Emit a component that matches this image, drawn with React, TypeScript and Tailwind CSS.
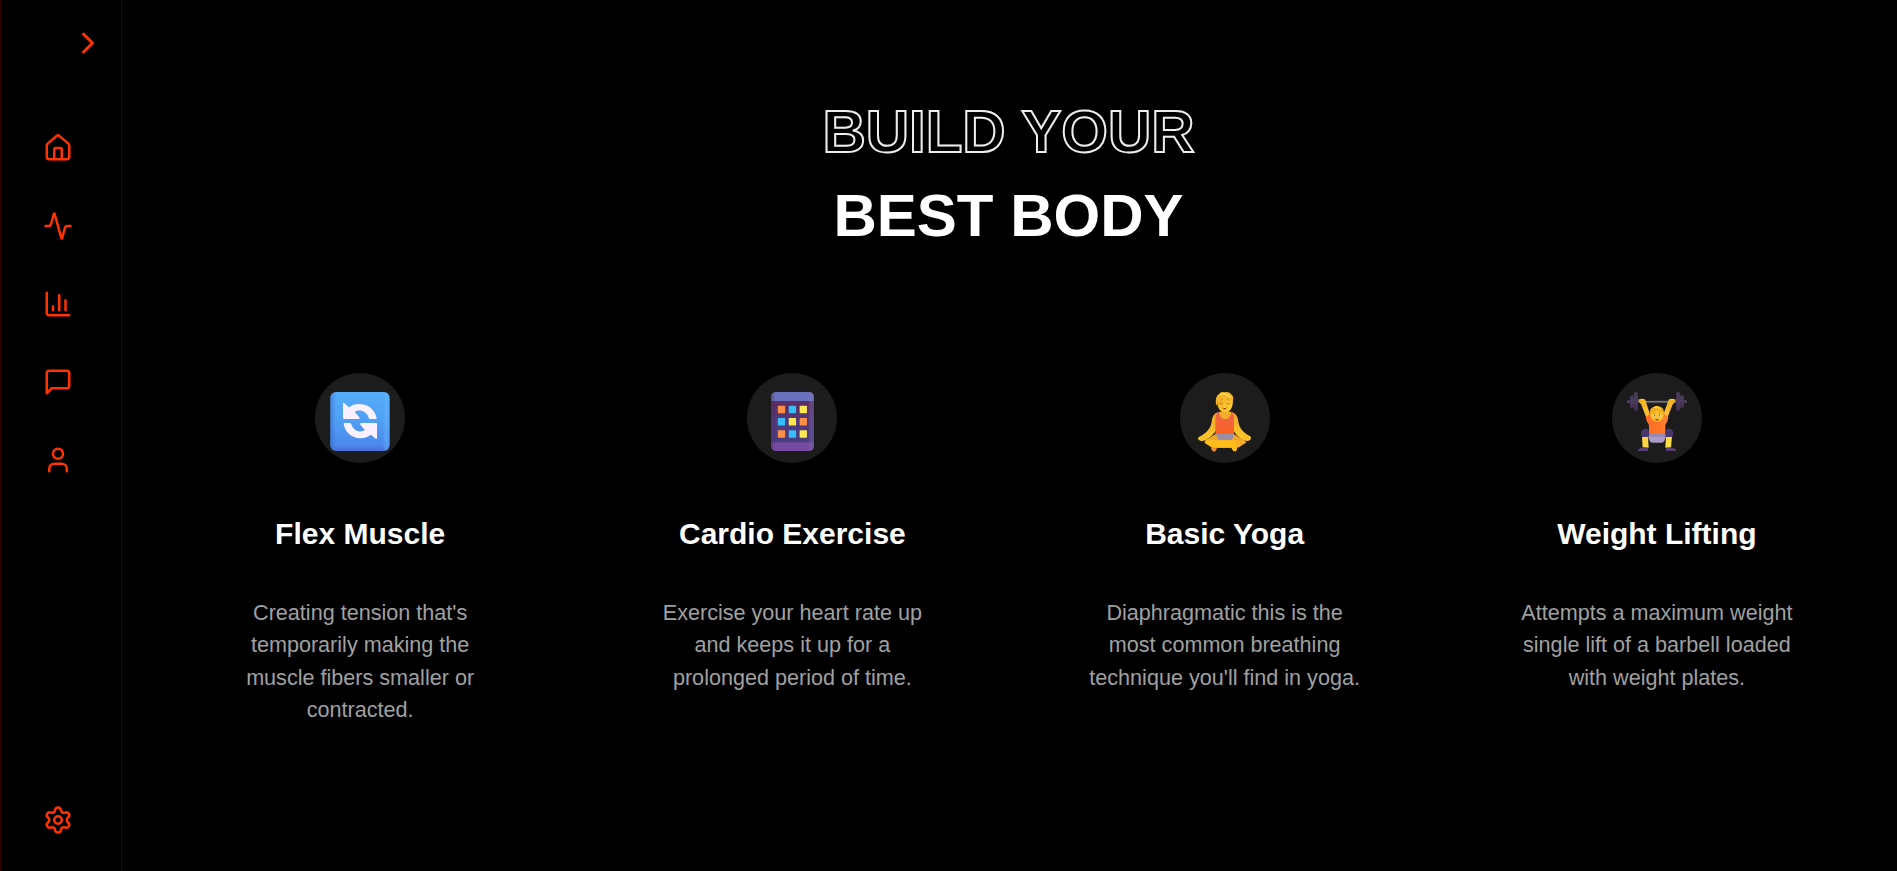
import type { ReactNode } from "react";
import { Activity, ChevronRight, House, Settings, User } from "lucide-react";

const strokeProps = {
  width: 30,
  height: 30,
  viewBox: "0 0 24 24",
  fill: "none",
  stroke: "currentColor",
  strokeWidth: 2,
  strokeLinecap: "round" as const,
  strokeLinejoin: "round" as const,
};

function ChartIcon() {
  return (
    <svg {...strokeProps}>
      <path d="M3 3v16a2 2 0 0 0 2 2h16M18 17V9M13 17V5M8 17v-3" />
    </svg>
  );
}

function MessageIcon() {
  return (
    <svg {...strokeProps}>
      <path d="M21 15a2 2 0 0 1-2 2H7l-4 4V5a2 2 0 0 1 2-2h14a2 2 0 0 1 2 2z" />
    </svg>
  );
}

function FlexArt() {
  return (
    <svg width="90" height="90" viewBox="45 39 270 270">
      <defs>
        <linearGradient id="fx" x1="0" y1="0" x2="0" y2="1">
          <stop offset="0" stopColor="#55acfa" />
          <stop offset="0.5" stopColor="#4f9ff3" />
          <stop offset="0.9" stopColor="#4b8aec" />
          <stop offset="1" stopColor="#4a6fd6" />
        </linearGradient>
        <linearGradient id="fxs" x1="0" y1="0" x2="1" y2="0">
          <stop offset="0" stopColor="#3765c0" stopOpacity="0.6" />
          <stop offset="0.1" stopColor="#3f79dc" stopOpacity="0" />
          <stop offset="0.88" stopColor="#6cbcff" stopOpacity="0" />
          <stop offset="0.95" stopColor="#6cbcff" stopOpacity="0.45" />
          <stop offset="1" stopColor="#5a9cf0" stopOpacity="0.3" />
        </linearGradient>
      </defs>
      <rect x="91" y="96" width="178" height="177" rx="17" fill="url(#fx)" />
      <rect x="91" y="96" width="178" height="177" rx="17" fill="url(#fxs)" />
      <g fill="#faf0ff">
        <path d="M129 133q0-8 6-2l12 11c23-19 73-12 83 32q0 3-3 3h-17q-3 0-4-4c-6-19-27-27-42-17l13 14q5 7-3 7h-42q-3 0-3-3z" />
        <path d="M231 232q0 8-6 3l-12-11c-26 20-73 13-82-31q0-4 3-4h15q4 0 5 4c5 18 25 27 41 17l-13-14q-4-7 3-7h43q3 0 3 3z" />
      </g>
    </svg>
  );
}

const phoneDots = [
  ["#fe8f46", "#38bdfc", "#fde752"],
  ["#38bdfc", "#fde752", "#fe8f46"],
  ["#fe8f46", "#38bdfc", "#fde752"],
];

function CardioArt() {
  return (
    <svg width="90" height="90" viewBox="45 39 270 270">
      <defs>
        <linearGradient id="cd" x1="0" y1="0" x2="0" y2="1">
          <stop offset="0" stopColor="#5d2c60" />
          <stop offset="0.25" stopColor="#5a2f66" />
          <stop offset="0.5" stopColor="#50397a" />
          <stop offset="1" stopColor="#443f83" />
        </linearGradient>
        <linearGradient id="cds" x1="0" y1="0" x2="1" y2="0">
          <stop offset="0" stopColor="#492b5b" stopOpacity="0.5" />
          <stop offset="0.1" stopColor="#492b5b" stopOpacity="0" />
          <stop offset="0.86" stopColor="#8a7ab0" stopOpacity="0" />
          <stop offset="0.94" stopColor="#8580b8" stopOpacity="0.35" />
          <stop offset="1" stopColor="#55508d" stopOpacity="0.4" />
        </linearGradient>
        <clipPath id="cdc">
          <rect x="117" y="96" width="129" height="177" rx="15" />
        </clipPath>
      </defs>
      <g clipPath="url(#cdc)">
        <rect x="117" y="96" width="129" height="177" fill="url(#cd)" />
        <rect x="117" y="96" width="129" height="27" fill="#6970bb" />
        <rect x="117" y="247" width="129" height="26" fill="#754aa0" />
        <rect x="117" y="96" width="129" height="177" fill="url(#cds)" />
      </g>
      {phoneDots.map((row, r) =>
        row.map((c, i) => (
          <rect key={`${r}${i}`} x={137.5 + i * 32.7} y={137.5 + r * 36.7} width="22" height="22" rx="2" fill={c} />
        )),
      )}
    </svg>
  );
}

function YogaArt() {
  return (
    <svg width="90" height="90" viewBox="45 39 270 270">
      <defs>
        <linearGradient id="yt" x1="0" y1="0" x2="0" y2="1">
          <stop offset="0" stopColor="#ea6547" />
          <stop offset="1" stopColor="#fb6422" />
        </linearGradient>
        <linearGradient id="ys" x1="0" y1="0" x2="0" y2="1">
          <stop offset="0" stopColor="#eda52c" />
          <stop offset="0.5" stopColor="#f6b929" />
          <stop offset="1" stopColor="#ffcb2a" />
        </linearGradient>
        <linearGradient id="yf" x1="0" y1="0" x2="1" y2="1">
          <stop offset="0" stopColor="#f0a52e" />
          <stop offset="1" stopColor="#ffd42d" />
        </linearGradient>
      </defs>
      <path d="M138 262h18l-2 8q-4 7-10 4-6-3-6-12z" fill="#e58b3c" />
      <path d="M199 260h17v8q-1 8-8 6-7-2-9-14z" fill="#ffb91c" />
      <path d="M159 157c-13 4-17 14-19 27-2 20-14 35-37 46q-7 5-2 9 8 7 21 1c20-11 31-25 37-41z" fill="url(#ys)" />
      <path d="M201 157c13 4 17 14 19 27 2 20 15 35 36 45q4 5 0 10-8 7-21 1c-20-11-29-25-36-41z" fill="url(#ys)" />
      <path d="M122 240l31-19h52l31 19 8 7-20 13q-5 3-12 3h-65q-8 0-14-5l-14-9z" fill="#f0a62c" />
      <path d="M152 220h56l-7 20h-41z" fill="#9a8fa9" />
      <path d="M122 241h88q7 1 7 22h-66q-10 0-16-5l-16-11z" fill="#ffbd19" />
      <path d="M210 240h24l10 7-22 14q-7 3-9-6z" fill="#f6b126" />
      <path d="M170 146h22v16q-10 12-22 0z" fill="#e7a033" />
      <path d="M158 157h45q5 8 4 19v45h-56v-45q0-12 7-19z" fill="url(#yt)" />
      <path d="M162 155q2 22 19 22 16 0 18-22z" fill="#f2ae2a" />
      <ellipse cx="180" cy="130" rx="23" ry="27" fill="url(#yf)" />
      <path d="M154 138q-6-28 8-36 5-9 17-5 15-4 21 7 7 6 4 16l-1 15-4-14q-12 1-20-8-9 9-20 11z" fill="#f4b429" />
      <path d="M164 106q12-8 20-3l14 9" stroke="#ffd951" strokeWidth="5" fill="none" />
      <path d="M164 130q5 4 9 0M185 130q5 4 9 0" stroke="#8b4838" strokeWidth="2" fill="none" />
      <path d="M166 121l7-3M186 118l7 3" stroke="#ca751e" strokeWidth="2" />
      <path d="M173 141q6 4 12 0-1 7-6 7-5 0-6-7z" fill="#a51c34" />
      <path d="M175 142h8v2h-8z" fill="#fff" />
      <path d="M104 235l11-8M109 241l13-12M250 235l-13-10M246 241l-12-11" stroke="#e99922" strokeWidth="2" />
    </svg>
  );
}

function LiftArt() {
  return (
    <svg width="90" height="90" viewBox="45 39 270 270">
      <defs>
        <linearGradient id="lp" x1="0" y1="0" x2="0" y2="1">
          <stop offset="0" stopColor="#453b52" />
          <stop offset="0.5" stopColor="#493a5b" />
          <stop offset="1" stopColor="#3e2d50" />
        </linearGradient>
        <linearGradient id="ls" x1="0" y1="0" x2="1" y2="0">
          <stop offset="0" stopColor="#ff6d26" />
          <stop offset="0.7" stopColor="#ff7628" />
          <stop offset="1" stopColor="#ff8940" />
        </linearGradient>
        <linearGradient id="la" x1="0" y1="0" x2="0" y2="1">
          <stop offset="0" stopColor="#f6b229" />
          <stop offset="1" stopColor="#f9c438" />
        </linearGradient>
      </defs>
      <rect x="91" y="122.5" width="178" height="5.5" fill="#77747d" />
      <g fill="url(#lp)">
        <rect x="93" y="120" width="8" height="10" />
        <rect x="99" y="106" width="12" height="38" rx="5" />
        <rect x="110" y="96" width="13" height="57" rx="6" />
        <rect x="237" y="96" width="13" height="57" rx="6" />
        <rect x="249" y="106" width="12" height="38" rx="5" />
        <rect x="259" y="120" width="8" height="10" />
      </g>
      <path d="M129 124l17-1 14 43-12 7z" fill="url(#la)" />
      <path d="M231 124l-17-1-16 43 13 7z" fill="url(#la)" />
      <path d="M124 119q12-5 21 0l1 8q-8 5-17 3zM236 119q-12-5-21 0l-1 8q8 5 17 3z" fill="#ffbd28" />
      <path d="M126 124h15M219 124h15" stroke="#d88b20" strokeWidth="2" />
      <path d="M146 171l12-9h44l12 9q-1 12-9 24v31h-49v-31q-9-12-10-24z" fill="url(#ls)" />
      <path d="M151 223h58l-7 20q-2 5-9 5h-26q-8 0-9-5z" fill="#a99bc5" />
      <path d="M156 222h49v8h-49z" fill="#9587b2" />
      <path d="M135 229h18l2 34h-18z" fill="#ffd545" />
      <path d="M207 229h18l-3 34h-17z" fill="#ffdd47" />
      <path d="M132 218q2-12 15-12 9 0 10 14l-2 11h-20q-4-5-3-13zM229 218q-2-12-15-12-9 0-10 14l2 11h19q5-5 4-13z" fill="#49366c" />
      <path d="M123 272q0-6 9-7l6-4 15 2v10h-30zM237 272q0-6-9-7l-6-4-15 2v10h30z" fill="#594074" />
      <ellipse cx="180" cy="164" rx="20" ry="22" fill="#fac12c" />
      <path d="M160 165q-5-19 8-23 10-9 21-2 13 2 12 24l-5-9q-11 1-18-4-7 6-15 5z" fill="#eda820" />
      <path d="M169 144q12-6 22 3" stroke="#ffd13a" strokeWidth="4" fill="none" />
      <path d="M168 162l7-2M185 160l7 2" stroke="#b66b22" strokeWidth="2" />
      <ellipse cx="172" cy="167" rx="4" ry="3" fill="#fff" />
      <ellipse cx="188" cy="167" rx="4" ry="3" fill="#fff" />
      <circle cx="173" cy="167" r="2.2" fill="#643532" />
      <circle cx="187" cy="167" r="2.2" fill="#643532" />
      <path d="M174 177h12q-1 5-6 5t-6-5z" fill="#c52b35" />
    </svg>
  );
}

const features: { title: string; lines: string[]; art: ReactNode }[] = [
  {
    title: "Flex Muscle",
    lines: ["Creating tension that's", "temporarily making the", "muscle fibers smaller or", "contracted."],
    art: <FlexArt />,
  },
  {
    title: "Cardio Exercise",
    lines: ["Exercise your heart rate up", "and keeps it up for a", "prolonged period of time."],
    art: <CardioArt />,
  },
  {
    title: "Basic Yoga",
    lines: ["Diaphragmatic this is the", "most common breathing", "technique you'll find in yoga."],
    art: <YogaArt />,
  },
  {
    title: "Weight Lifting",
    lines: ["Attempts a maximum weight", "single lift of a barbell loaded", "with weight plates."],
    art: <LiftArt />,
  },
];

export default function App() {
  return (
    <div className="flex h-[871px] w-full overflow-hidden bg-black font-['Liberation_Sans',Arial,sans-serif] text-white">
      <aside className="flex w-[122px] shrink-0 flex-col border-x border-[#330000] pb-9 pt-[25px] text-[#ff3300]">
        <button className="mr-[15px] self-end" aria-label="Expand">
          <ChevronRight size={36} />
        </button>
        <nav className="mt-[72px] flex flex-1 flex-col gap-12 pl-[42px]">
          <House size={30} />
          <Activity size={30} />
          <ChartIcon />
          <MessageIcon />
          <User size={30} />
          <Settings size={30} className="mt-auto" />
        </nav>
      </aside>
      <main className="flex-1 pl-[22px] pr-6 pt-[90px]">
        <h1 className="text-center text-[60px] font-bold leading-[84px]">
          <span className="block text-transparent [-webkit-text-stroke:2px_#ededed]">BUILD YOUR</span>
          <span className="block">BEST BODY</span>
        </h1>
        <section className="mt-[115px] grid grid-cols-4">
          {features.map((f) => (
            <article key={f.title} className="flex flex-col items-center text-center">
              <div className="size-[90px] overflow-hidden rounded-full bg-[#1c1c1c]">{f.art}</div>
              <h3 className="mt-[50px] text-[30px] font-bold leading-[42px]">{f.title}</h3>
              <p className="mt-[42px] text-[21.6px] leading-[32.4px] text-[#a0a0a0]">
                {f.lines.map((l) => (
                  <span key={l} className="block whitespace-nowrap">
                    {l}
                  </span>
                ))}
              </p>
            </article>
          ))}
        </section>
      </main>
    </div>
  );
}
